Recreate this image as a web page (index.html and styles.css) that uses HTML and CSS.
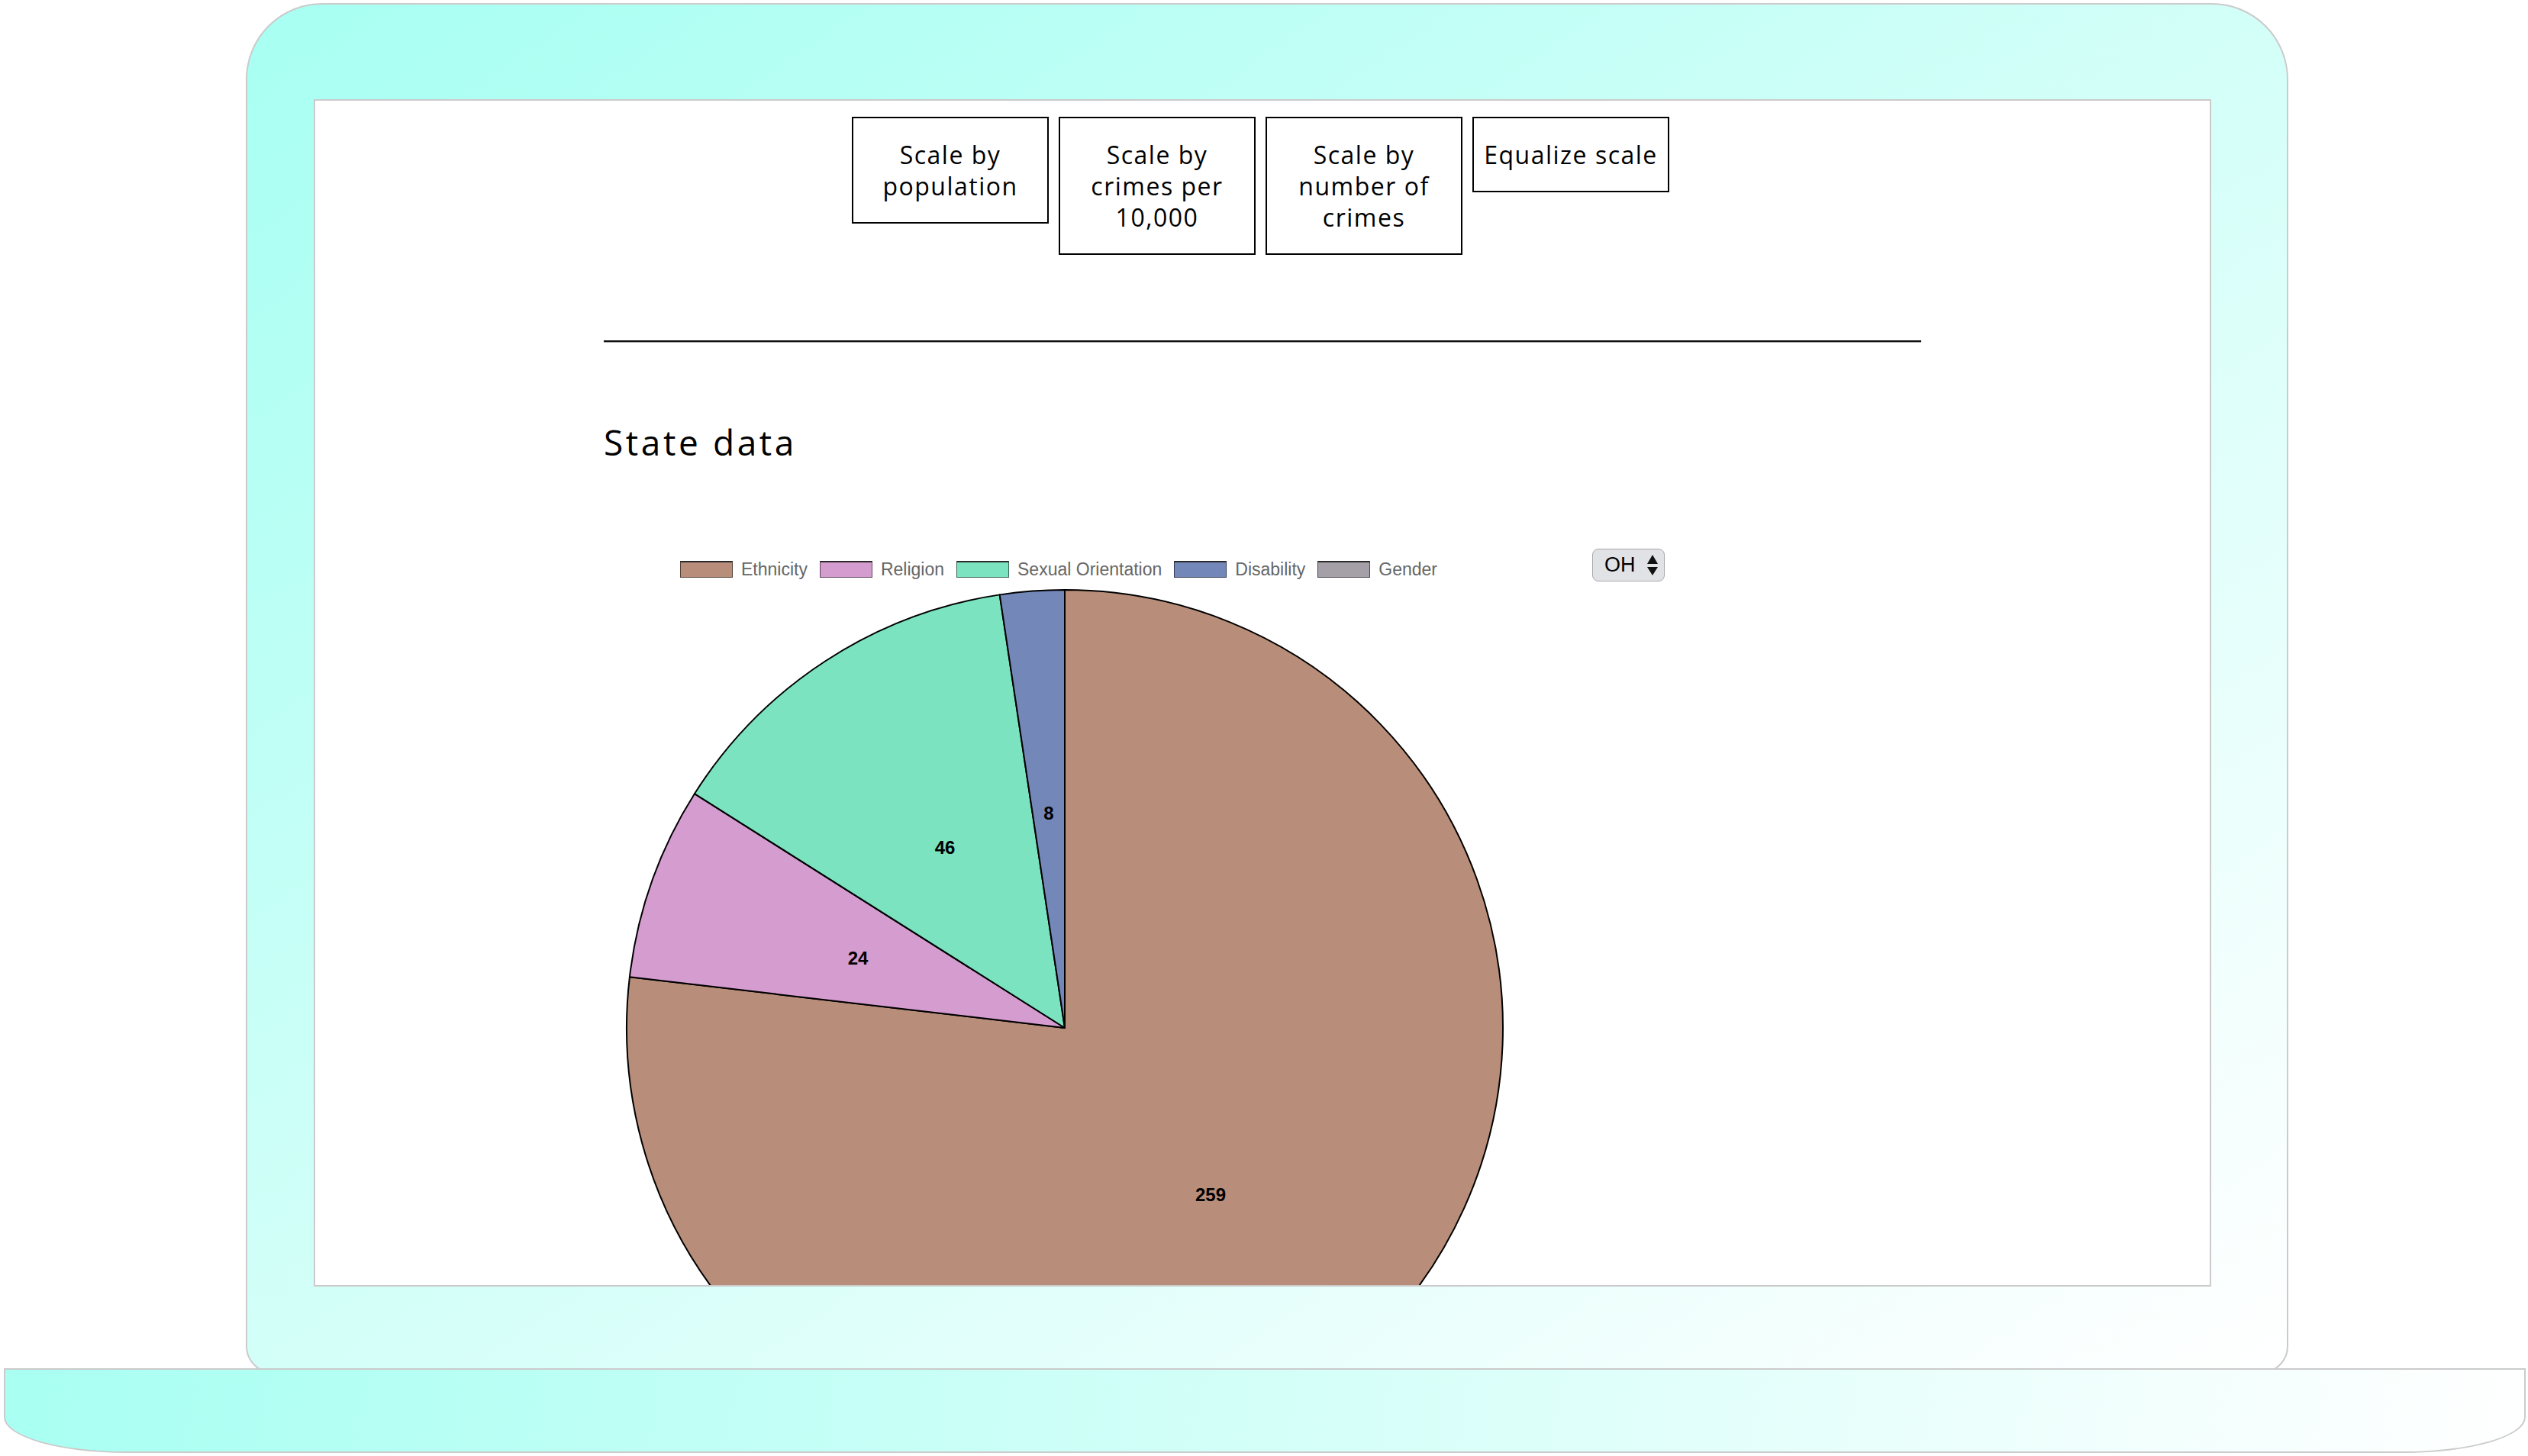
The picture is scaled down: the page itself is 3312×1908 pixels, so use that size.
FILE: index.html
```html
<!DOCTYPE html>
<html lang="en">
<head>
<meta charset="utf-8">
<title>State data</title>
<link rel="stylesheet" href="styles.css">
</head>
<body>
<div class="laptop">
  <div class="lid">
    <div class="screen">
      <div class="page">
        <div class="scale-buttons">
          <button class="scale-btn">Scale by population</button>
          <button class="scale-btn">Scale by crimes per 10,000</button>
          <button class="scale-btn">Scale by number of crimes</button>
          <button class="scale-btn">Equalize scale</button>
        </div>
        <hr class="divider">
        <h2 class="section-title">State data</h2>
        <div class="chart-row">
          <div class="chart">
            <ul class="legend">
              <li class="legend-item"><span class="swatch swatch-ethnicity"></span>Ethnicity</li>
              <li class="legend-item"><span class="swatch swatch-religion"></span>Religion</li>
              <li class="legend-item"><span class="swatch swatch-sexual"></span>Sexual Orientation</li>
              <li class="legend-item"><span class="swatch swatch-disability"></span>Disability</li>
              <li class="legend-item"><span class="swatch swatch-gender"></span>Gender</li>
            </ul>
            <svg class="pie" width="1208" height="1190" viewBox="0 0 1208 1190">
              <path class="slice slice-ethnicity" d="M604,580 L604,6 A574,574 0 1 1 33.89,513.26 Z"/>
              <path class="slice slice-religion" d="M604,580 L33.89,513.26 A574,574 0 0 1 118.90,273.17 Z"/>
              <path class="slice slice-sexual" d="M604,580 L118.90,273.17 A574,574 0 0 1 518.70,12.37 Z"/>
              <path class="slice slice-disability" d="M604,580 L518.70,12.37 A574,574 0 0 1 604,6 Z"/>
              <text class="slice-label" x="795" y="798">259</text>
              <text class="slice-label" x="333" y="488">24</text>
              <text class="slice-label" x="447" y="343">46</text>
              <text class="slice-label" x="583" y="298">8</text>
            </svg>
          </div>
          <div class="state-select">
            <span class="state-value">OH</span>
            <svg class="select-arrows" width="14" height="27" viewBox="0 0 14 27">
              <path d="M0,12 L7,0 L14,12 Z"/>
              <path d="M0,16 L14,16 L7,27 Z"/>
            </svg>
          </div>
        </div>
      </div>
    </div>
  </div>
  <div class="base"></div>
</div>
</body>
</html>
```
FILE: styles.css
```css
html, body {
  margin: 0;
  padding: 0;
  background: #ffffff;
  overflow: hidden;
}

body {
  width: 3312px;
  height: 1908px;
  font-family: "Open Sans", "Liberation Sans", sans-serif;
  color: #000;
}

.laptop {
  padding-top: 4px;
}

.lid {
  box-sizing: border-box;
  margin-left: 322px;
  width: 2676px;
  height: 1796px;
  border: 2px solid #cbcbcb;
  border-radius: 100px 100px 36px 36px;
  background: linear-gradient(to bottom right, #a7fff2 0%, #ffffff 100%);
  padding: 124px 99px 0 87px;
}

.screen {
  box-sizing: border-box;
  height: 1556px;
  border: 2px solid #cbcbcb;
  background: #ffffff;
  overflow: hidden;
}

.base {
  position: relative;
  box-sizing: border-box;
  margin-top: -7px;
  margin-left: 5px;
  width: 3304px;
  height: 111px;
  border: 2px solid #cbcbcb;
  border-radius: 0 0 160px 160px / 0 0 47px 47px;
  background: linear-gradient(100deg, #a8fff2 0%, #ffffff 100%);
}

.page {
  width: 1726px;
  margin: 0 auto;
  padding-top: 21px;
}

.scale-buttons {
  display: flex;
  justify-content: center;
  align-items: flex-start;
  gap: 13px;
  padding-right: 5px;
}

.scale-btn {
  box-sizing: border-box;
  width: 258px;
  margin: 0;
  padding: 27px 6px;
  border: 2px solid #000;
  border-radius: 0;
  background: #ffffff;
  color: #000;
  font-family: "Open Sans", "Liberation Sans", sans-serif;
  font-size: 32px;
  line-height: 41px;
  letter-spacing: 1.5px;
  text-align: center;
}

.divider {
  margin: 112px 0 0;
  height: 0;
  border: 0;
  border-top: 2px solid #111111;
  border-bottom: 1px solid #9a9a9a;
}

.section-title {
  margin: 103px 0 0;
  font-weight: 400;
  font-size: 46px;
  line-height: 54px;
  letter-spacing: 3.6px;
}

.chart-row {
  display: flex;
  align-items: flex-start;
  margin-top: 113px;
}

.chart {
  flex: none;
  width: 1208px;
}

.legend {
  list-style: none;
  margin: 0;
  padding: 16px 16px 0 0;
  height: 22px;
  display: flex;
  justify-content: center;
  align-items: center;
  gap: 16px;
  font-family: "Liberation Sans", Arial, sans-serif;
  font-size: 23px;
  color: #666666;
}

.legend-item {
  display: flex;
  align-items: center;
  gap: 11px;
  line-height: 22px;
}

.swatch {
  box-sizing: border-box;
  width: 69px;
  height: 22px;
  border: 1px solid rgba(0, 0, 0, 0.55);
  border-top: 2px solid #2a2a2a;
}

.swatch-ethnicity { background: #b88e7a; }
.swatch-religion { background: #d59cd0; }
.swatch-sexual { background: #7be3bf; }
.swatch-disability { background: #7487b9; }
.swatch-gender { background: #a59fa7; }

.pie {
  display: block;
  margin-top: 10px;
}

.slice {
  stroke: #000;
  stroke-width: 2;
  stroke-linejoin: round;
}

.slice-ethnicity { fill: #b88e7a; }
.slice-religion { fill: #d59cd0; }
.slice-sexual { fill: #7be3bf; }
.slice-disability { fill: #7487b9; }

.slice-label {
  font-family: "Liberation Sans", Arial, sans-serif;
  font-weight: 700;
  font-size: 24px;
  fill: #000;
  text-anchor: middle;
  dominant-baseline: central;
}

.state-select {
  flex: none;
  box-sizing: border-box;
  margin-left: 87px;
  width: 95px;
  height: 43px;
  padding-left: 15px;
  display: flex;
  align-items: center;
  gap: 15px;
  border: 1.5px solid #a9a9a9;
  border-radius: 8px;
  background: #e1e2e6;
  font-family: "Liberation Sans", Arial, sans-serif;
  font-size: 27px;
  color: #000;
}

.state-value {
  line-height: 1;
}

.select-arrows {
  display: block;
  fill: #111;
}
```
